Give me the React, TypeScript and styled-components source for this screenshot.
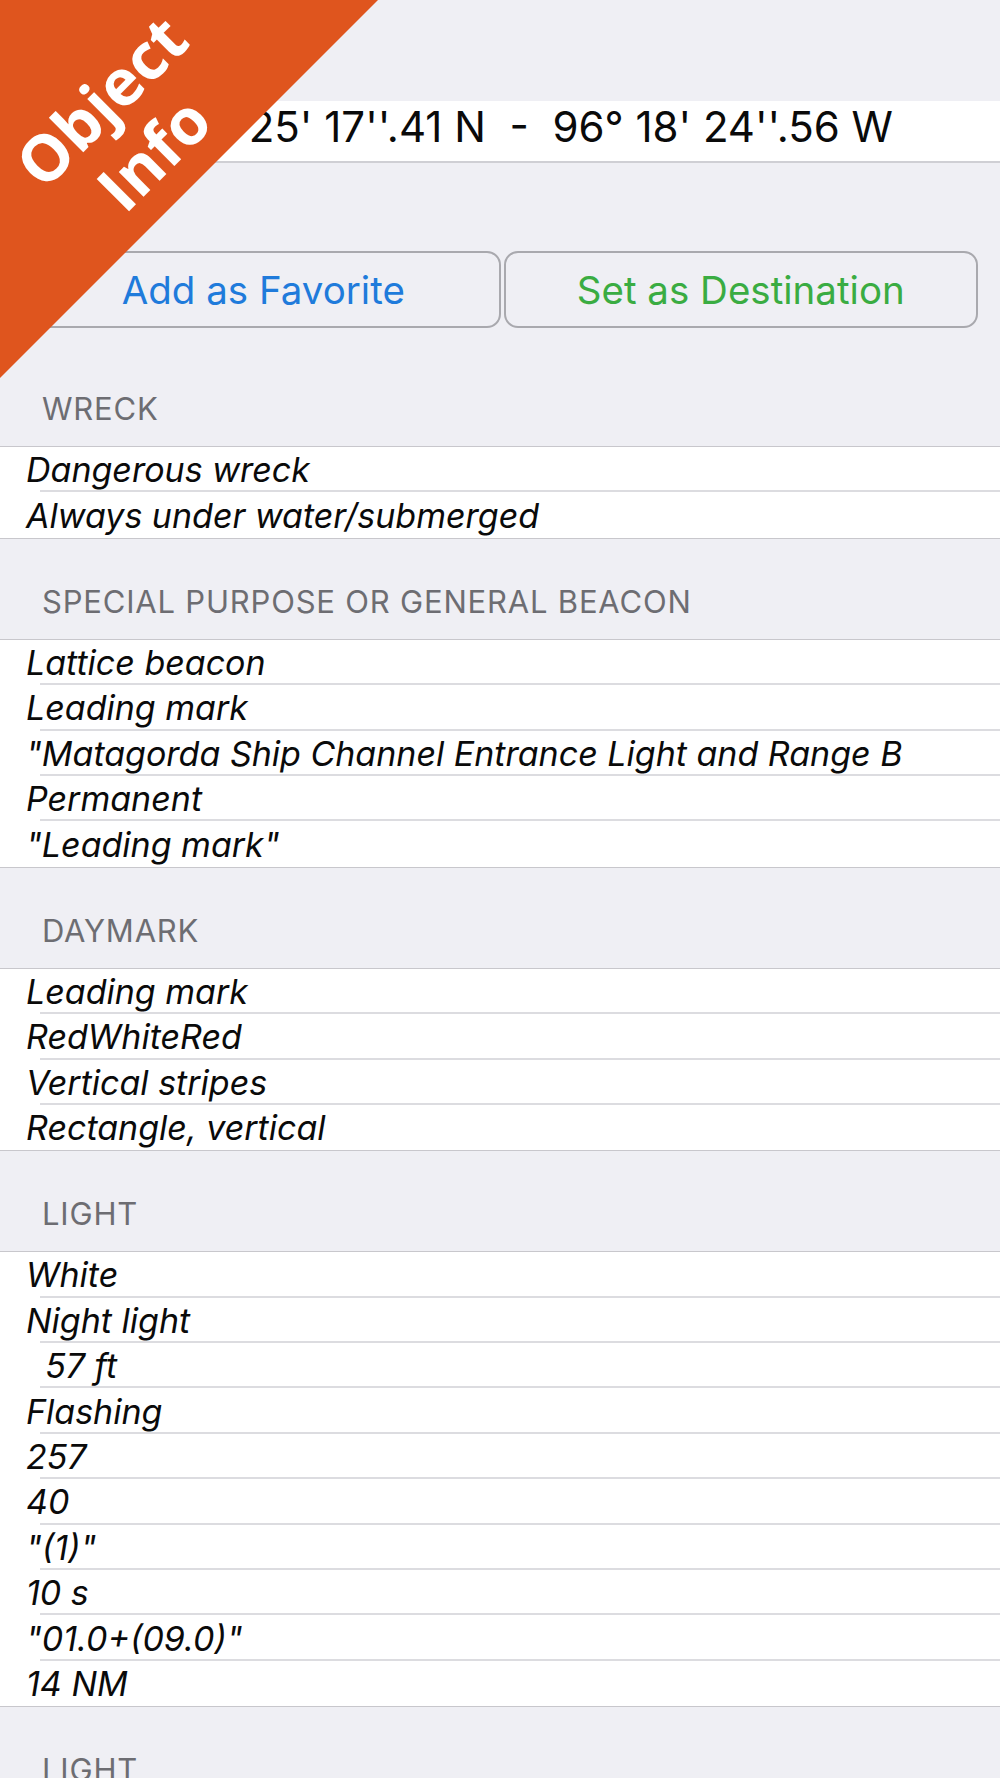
import styled, { createGlobalStyle } from "styled-components"

interface InfoSection {
  title: string
  items: string[]
}

const sections: InfoSection[] = [
  { title: "WRECK", items: ["Dangerous wreck", "Always under water/submerged"] },
  {
    title: "SPECIAL PURPOSE OR GENERAL BEACON",
    items: [
      "Lattice beacon",
      "Leading mark",
      "\"Matagorda Ship Channel Entrance Light and Range B",
      "Permanent",
      "\"Leading mark\"",
    ],
  },
  { title: "DAYMARK", items: ["Leading mark", "RedWhiteRed", "Vertical stripes", "Rectangle, vertical"] },
  {
    title: "LIGHT",
    items: ["White", "Night light", "  57 ft", "Flashing", "257", "40", "\"(1)\"", "10 s", "\"01.0+(09.0)\"", "14 NM"],
  },
  { title: "LIGHT", items: ["White", "Night light", "  57 ft", "Fixed"] },
]

const App = () => {
  return (
    <Page>
      <GlobalStyle />
      <CoordinateCell>28° 25' 17''.41 N  -  96° 18' 24''.56 W</CoordinateCell>
      <ButtonRow>
        <ActionButton $color="#1f7bdb">Add as Favorite</ActionButton>
        <ActionButton $color="#3aac42">Set as Destination</ActionButton>
      </ButtonRow>
      {sections.map((section, i) => (
        <div key={i}>
          <SectionHeader>{section.title}</SectionHeader>
          <Group>
            {section.items.map((item, j) => (
              <Row key={j}>{item}</Row>
            ))}
          </Group>
        </div>
      ))}
      <Banner>
        <BannerText>
          Object
          <br />
          Info
        </BannerText>
      </Banner>
    </Page>
  )
}

const GlobalStyle = createGlobalStyle`
  html, body {
    margin: 0;
    padding: 0;
    background: #efeff4;
  }
  body {
    font-family: Inter, "Liberation Sans", sans-serif;
  }
`

const Page = styled.div`
  position: relative;
  width: 1000px;
  height: 1778px;
  overflow: hidden;
  padding-top: 101px;
  box-sizing: border-box;
  background: #efeff4;
`

const CoordinateCell = styled.div`
  height: 62px;
  box-sizing: border-box;
  background: #fff;
  border-bottom: 2px solid #cfcfd4;
  padding-right: 107px;
  font-size: 42px;
  line-height: 52px;
  color: #0a0a0a;
  text-align: right;
  white-space: pre;
  overflow: hidden;
`

const ButtonRow = styled.div`
  display: flex;
  gap: 3px;
  margin: 88px 0 18px;
  padding: 0 22px 0 26px;
`

const ActionButton = styled.button<{ $color: string }>`
  flex: 1;
  height: 77px;
  box-sizing: border-box;
  border: 2px solid #a9a9ae;
  border-radius: 14px;
  background: transparent;
  font-family: Inter, "Liberation Sans", sans-serif;
  font-size: 38.5px;
  color: ${(p) => p.$color};
  padding: 0;
`

const SectionHeader = styled.div`
  height: 100px;
  box-sizing: border-box;
  display: flex;
  align-items: flex-end;
  padding: 0 0 19px 42px;
  font-size: 31px;
  line-height: 36px;
  letter-spacing: 0.8px;
  color: #6d6d72;
`

const Group = styled.div`
  background: #fff;
  border-top: 1px solid #c8c7cc;
  border-bottom: 1px solid #c8c7cc;
`

const Row = styled.div`
  position: relative;
  height: 45.4px;
  display: flex;
  align-items: center;
  padding-left: 26px;
  font-size: 34px;
  font-style: italic;
  color: #0a0a0a;
  white-space: pre;
  overflow: hidden;

  &:not(:last-child)::after {
    content: "";
    position: absolute;
    left: 40px;
    right: 0;
    bottom: 0;
    height: 2px;
    background: #dcdce0;
  }
`

const Banner = styled.div`
  position: absolute;
  top: 0;
  left: 0;
  width: 378px;
  height: 378px;
  background: #df551e;
  clip-path: polygon(0 0, 100% 0, 0 100%);
  pointer-events: none;
`

const BannerText = styled.div`
  position: absolute;
  left: 127px;
  top: 127px;
  transform: translate(-50%, -50%) rotate(-45deg);
  color: #fff;
  font-family: "Open Sans", sans-serif;
  font-weight: 700;
  font-size: 64px;
  line-height: 74px;
  text-align: center;
  white-space: nowrap;
`

export default App
